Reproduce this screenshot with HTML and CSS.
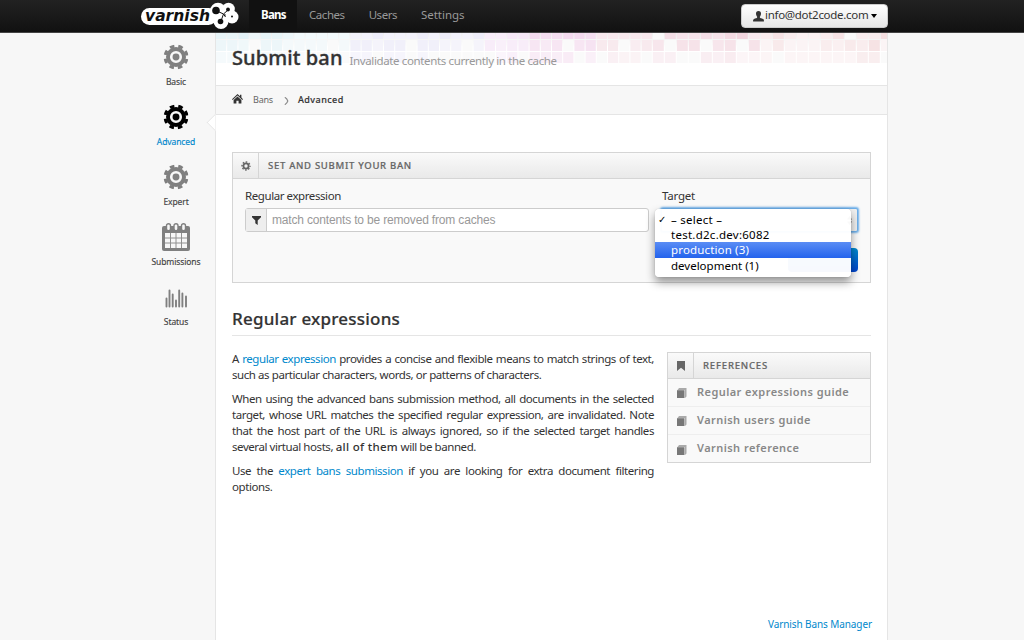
FILE: index.html
```html
<!DOCTYPE html>
<html lang="en">
<head>
<meta charset="utf-8">
<title>Submit ban - Varnish Bans Manager</title>
<link rel="stylesheet" href="styles.css">
</head>
<body>
<svg class="defs" width="0" height="0">
  <symbol id="gear" viewBox="0 0 24 24">
    <g fill="none" stroke="currentColor"><circle cx="12" cy="12" r="7.700" stroke-width="3.800"/><circle cx="12" cy="12" r="10.500" stroke-width="2.900" stroke-dasharray="4.400 3.847" stroke-dashoffset="-1.923"/></g>
    <circle cx="12" cy="12" r="3.300" fill="currentColor"/>
  </symbol>
  <symbol id="book" viewBox="0 0 12 12">
    <path d="M3 1h7.500v8.500L9 11V3H1.500z" fill="#aaa"/><path d="M1 3.200h7.500V11H1z" fill="#777"/>
  </symbol>
</svg>
<header class="topbar">
  <div class="topbar-inner">
    <svg class="logo" width="102" height="32" viewBox="0 0 102 32">
      <g fill="#fff"><rect x="2" y="8" width="76" height="17" rx="8.500"/><circle cx="79" cy="10.500" r="7.800"/><circle cx="89.500" cy="9" r="6.300"/><circle cx="93" cy="17" r="6.500"/><circle cx="82" cy="21.500" r="7.500"/></g>
      <g fill="#111"><circle cx="77" cy="10.500" r="3.800"/><circle cx="89" cy="9.500" r="1.900"/><circle cx="93" cy="16.500" r="1"/><circle cx="81.500" cy="21.500" r="2.800"/></g>
      <path d="M78 11l6.500 3 4.500-4M84.500 14l-2.500 7M84.500 14l2 3" fill="none" stroke="#111" stroke-width="1"/>
      <text class="logo-text" x="6" y="20.500" textLength="65" lengthAdjust="spacingAndGlyphs">varnish</text>
    </svg>
    <nav class="nav">
      <a class="nav-item nav-active">Bans</a>
      <a class="nav-item">Caches</a>
      <a class="nav-item">Users</a>
      <a class="nav-item n-set">Settings</a>
    </nav>
    <button class="account">
      <svg width="11" height="11" viewBox="0 0 11 11"><path d="M5.500 0c1.800 0 2.600 1.200 2.500 2.700C7.900 4.200 7.300 5 6.900 5.600v1.200c.8.700 3.700.8 4 2.300V10.500H.1V9.100c.3-1.500 3.200-1.600 4-2.300V5.600C3.700 5 3.100 4.200 3 2.700 2.900 1.200 3.700 0 5.500 0z" fill="#333"/></svg>
      <span class="mail">info@dot2code.com</span><i class="caret"></i>
    </button>
  </div>
</header>
<div class="layout">
  <aside class="side">
    <a class="side-item"><svg class="side-icon" width="26" height="30"><use href="#gear" x="0.500" y="2.500" width="25" height="25"/></svg><span>Basic</span></a>
    <a class="side-item side-active"><svg class="side-icon" width="26" height="30"><use href="#gear" x="0.500" y="2.500" width="25" height="25"/></svg><span>Advanced</span></a>
    <a class="side-item"><svg class="side-icon" width="26" height="30"><use href="#gear" x="0.500" y="2.500" width="25" height="25"/></svg><span>Expert</span></a>
    <a class="side-item"><svg class="side-icon" width="28" height="30" viewBox="0 0 28 30">
      <path d="M2 4h24q2 0 2 2v21q0 2-2 2H2q-2 0-2-2V6q0-2 2-2z" fill="#808080"/>
      <path d="M3 11h22v15H3z" fill="#f7f7f7"/>
      <path d="M8.500 11v15M14 11v15M19.500 11v15M3 16h22M3 21h22" stroke="#909090" fill="none"/>
      <g fill="#f7f7f7" stroke="#808080" stroke-width="1.400"><rect x="4.500" y="1.700" width="4" height="7" rx="2"/><rect x="12" y="1.700" width="4" height="7" rx="2"/><rect x="19.500" y="1.700" width="4" height="7" rx="2"/></g>
    </svg><span>Submissions</span></a>
    <a class="side-item"><svg class="side-icon" width="24" height="30" viewBox="0 0 24 30"><path d="M2.500 24.500V16.500M5.500 24.500V8.500M8.700 24.500V12.500M12 24.500V18.500M15.200 24.500V8.500M18.400 24.500V11.500M22 24.500V14.500" stroke="#808080" stroke-width="1.900" stroke-linecap="round"/></svg><span>Status</span></a>
  </aside>
  <main class="page">
    <div class="heading">
      <svg class="mosaic" id="mosaic" width="671" height="30"></svg>
      <h1 class="title">Submit ban</h1><span class="subtitle">Invalidate contents currently in the cache</span>
    </div>
    <div class="crumbs">
      <svg class="home" width="11" height="10" viewBox="0 0 11 10"><path d="M5.500 0L8 2.200V.8h1.400v2.700L11 5.200l-.7.700L5.500 1.600.7 5.900 0 5.200zM5.500 2.600L9.400 6v3.600H6.600V6.700H4.400v2.900H1.600V6z" fill="#333"/></svg>
      <a class="crumb">Bans</a>
      <svg class="chev" width="5" height="8" viewBox="0 0 5 8"><path d="M.8.3Q3 1.500 3.800 4 3 6.500.8 7.700" fill="none" stroke="#888" stroke-width="1.100"/></svg>
      <b class="crumb-now">Advanced</b>
    </div>
    <i class="pointer"></i>
    <div class="content">
      <section class="box form-box">
        <div class="box-head"><span class="box-icon"><svg class="small-gear" width="10" height="10" viewBox="0 0 10 10"><circle cx="5" cy="5" r="2.600" stroke-width="1.800"/><circle cx="5" cy="5" r="4" stroke-width="1.400" stroke-dasharray="1.600 1.542" stroke-dashoffset=".8"/></svg></span><span class="box-title t-ban">SET AND SUBMIT YOUR BAN</span></div>
        <div class="form-row">
          <div class="field-re">
            <label class="label">Regular expression</label>
            <div class="input"><span class="addon"><svg width="9" height="9" viewBox="0 0 9 9"><path d="M0 0h9v1.200L5.700 4.600V9L3.300 7.300V4.600L0 1.200z" fill="#333"/></svg></span><span class="placeholder">match contents to be removed from caches</span></div>
          </div>
          <div class="field-target">
            <label class="label l-target">Target</label>
            <div class="select"><svg width="5" height="9" viewBox="0 0 5 9"><path d="M0 3.500L2.500 0 5 3.500zM0 5.500L2.500 9 5 5.500z" fill="#555"/></svg></div>
            <button class="submit"></button>
            <div class="menu">
              <div class="option"><span class="check">✓</span><span class="o1">– select –</span></div>
              <div class="option"><span class="check"></span><span class="o1">test.d2c.dev:6082</span></div>
              <div class="option option-on"><span class="check"></span><span class="o3">production (3)</span></div>
              <div class="option"><span class="check"></span><span>development (1)</span></div>
            </div>
          </div>
        </div>
      </section>
      <h2 class="section-title">Regular expressions</h2>
      <div class="columns">
        <article class="text">
          <p><span class="line">A <a>regular expression</a> provides a concise and flexible means to match strings of text,</span>
          <span class="last">such as particular characters, words, or patterns of characters.</span></p>
          <p><span class="line">When using the advanced bans submission method, all documents in the selected</span>
          <span class="line">target, whose URL matches the specified regular expression, are invalidated. Note</span>
          <span class="line">that the host part of the URL is always ignored, so if the selected target handles</span>
          <span class="last">several virtual hosts, <b>all of them</b> will be banned.</span></p>
          <p><span class="line">Use the <a>expert bans submission</a> if you are looking for extra document filtering</span>
          <span class="last">options.</span></p>
        </article>
        <section class="box refs">
          <div class="box-head"><span class="box-icon"><svg width="8" height="10" viewBox="0 0 8 10"><path d="M0 0h8v10L4 6.800 0 10z" fill="#666"/></svg></span><span class="box-title">REFERENCES</span></div>
          <a class="ref"><svg width="12" height="12"><use href="#book"/></svg><span>Regular expressions guide</span></a>
          <a class="ref"><svg width="12" height="12"><use href="#book"/></svg><span>Varnish users guide</span></a>
          <a class="ref"><svg width="12" height="12"><use href="#book"/></svg><span>Varnish reference</span></a>
        </section>
      </div>
      <footer class="footer"><a>Varnish Bans Manager</a></footer>
    </div>
  </main>
</div>
<script src="mosaic.js"></script>
</body>
</html>
```
FILE: mosaic.js
```js
// Tint strength of each tile, one string per row.
const rows = [
  "33423321111111211121211222336556653333305445467324211240225",
  "33203311110122122022110132335450564403450660560614111324361",
  "11001100000011011010000001305445030322033004351110111111440"
];
const svg = document.getElementById("mosaic");
const tops = [0, 7, 19];
const heights = [6, 11, 11];
rows.forEach((row, r) => {
  [...row].forEach((level, c) => {
    const x = c < 39 ? c * 11.2 : 436.8 + (c - 39) * 12;
    const hue = c < 12 ? 195 : c < 24 ? 245 : c < 28 ? 295 : c < 34 ? 312 : c < 48 ? 340 : 355;
    const rect = document.createElementNS("http://www.w3.org/2000/svg", "rect");
    rect.setAttribute("x", x);
    rect.setAttribute("y", tops[r]);
    rect.setAttribute("width", c < 39 ? 10.2 : 11);
    rect.setAttribute("height", heights[r]);
    const l = 98 - Number(level) * (r === 0 ? 1.3 : r === 1 ? 0.9 : 0.6);
    rect.setAttribute("fill", `hsl(${hue} ${level > 0 ? 50 : 0}% ${l}%)`);
    svg.appendChild(rect);
  });
});
```
FILE: styles.css
```css
* { box-sizing: border-box; }
body { margin: 0; height: 640px; overflow: hidden; background: #f7f7f7; color: #333; font: 12px/16px "Noto Sans", sans-serif; }
a { color: #08c; text-decoration: none; }
.defs { position: absolute; }
.topbar { height: 33px; background: linear-gradient(#222, #111); border-bottom: 1px solid #444; }
.topbar-inner { display: flex; width: 748px; height: 32px; margin-left: 140px; }
.logo { margin-left: -1px; flex: none; }
.logo-text { font: italic bold 15.500px "DejaVu Sans", sans-serif; fill: #111; }
.nav { display: flex; margin-left: 8px; }
.nav-item { padding: 0 12px; color: #999; font-size: 11.500px; line-height: 30px; letter-spacing: -.45px; }
.n-set { letter-spacing: -.05px; }
.nav-active { width: 48px; background: #111; color: #fff; font-weight: bold; letter-spacing: -.75px; }
.account { display: flex; align-items: center; width: 147px; height: 24px; margin: 4px 0 0 auto; padding: 0 0 0 11px; border: 1px solid #ccc; border-radius: 4px; background: linear-gradient(#fff, #e6e6e6); color: #333; font: 11.500px/20px "Noto Sans", sans-serif; }
.mail { margin: -2px 0 0 1px; letter-spacing: -.3px; white-space: nowrap; }
.caret { margin-left: 3px; border: 3.500px solid transparent; border-top: 4px solid #000; border-bottom: 0; }
.layout { display: flex; height: 607px; }
.side { width: 76px; margin-left: 139px; padding-top: 9px; flex: none; }
.side-item { display: flex; flex-direction: column; align-items: center; width: 74px; height: 60px; color: #444; font-size: 8.500px; line-height: 12px; letter-spacing: -.1px; }
.side-item span { margin-top: 4px; white-space: nowrap; -webkit-text-stroke: .15px; }
.side-icon { color: #808080; }
.side-active { color: #08c; }
.side-active .side-icon { color: #000; }
.page { position: relative; display: flex; flex-direction: column; width: 673px; border: solid #e5e5e5; border-width: 0 1px; background: #fff; }
.heading { position: relative; display: flex; align-items: baseline; height: 53px; flex: none; padding: 11px 0 0 16px; border-bottom: 1px solid #e5e5e5; background: linear-gradient(#eee, #fff 14px); }
.mosaic { position: absolute; left: 0; top: 0; }
.title { position: relative; margin: 0; font-size: 20px; line-height: 28px; font-weight: 500; letter-spacing: .1px; -webkit-text-stroke: .35px #333; }
.subtitle { position: relative; margin-left: 7px; color: #999; font-size: 11.500px; letter-spacing: -.37px; }
.crumbs { display: flex; align-items: center; height: 29px; flex: none; padding: 0 0 1px 16px; border-bottom: 1px solid #e5e5e5; background: #f7f7f7; font-size: 9px; }
.home { margin-top: -2px; }
.crumb { margin-left: 10px; color: #666; letter-spacing: -.2px; }
.chev { margin-left: 11px; margin-top: 2px; }
.crumb-now { margin-left: 9px; font-weight: 500; letter-spacing: .45px; -webkit-text-stroke: .15px; }
.pointer { position: absolute; left: -7px; top: 83px; width: 13px; height: 13px; border: solid #e5e5e5; border-width: 0 0 1px 1px; background: #fff; transform: rotate(45deg); clip-path: polygon(0 0, 50% 50%, 100% 100%, 0 100%); }
.content { display: flex; flex: 1; flex-direction: column; min-height: 0; padding: 37px 16px 0; }
.box { border: 1px solid #d5d5d5; background: #f9f9f9; }
.box-head { display: flex; height: 26px; border-bottom: 1px solid #d5d5d5; background: linear-gradient(#fafafa, #e9e9e9); }
.box-icon { display: flex; align-items: center; justify-content: center; width: 26px; border-right: 1px solid #d5d5d5; }
.small-gear { fill: none; stroke: #666; }
.box-title { padding-left: 9px; color: #666; font-size: 9.500px; line-height: 26px; font-weight: 500; letter-spacing: .82px; -webkit-text-stroke: .2px; }
.t-ban { letter-spacing: .7px; }
.form-box { width: 639px; height: 131px; flex: none; }
.form-row { display: flex; padding: 9px 12px; }
.field-re { width: 405px; }
.label { display: block; height: 20px; font-size: 11.500px; letter-spacing: -.42px; line-height: 15px; }
.l-target { padding-left: 1px; letter-spacing: -.2px; }
.field-target { position: relative; flex: none; width: 197px; margin-left: 12px; }
.input { display: flex; height: 24px; border: 1px solid #ccc; border-radius: 3px; background: #fff; }
.addon { display: flex; align-items: center; justify-content: center; width: 21px; border-right: 1px solid #ccc; background: #eee; }
.placeholder { padding-left: 5px; color: #999; font: 12px/22px "Liberation Sans", Arial, sans-serif; letter-spacing: -.17px; white-space: nowrap; }
.select { display: flex; align-items: center; justify-content: flex-end; height: 24px; padding-right: 5px; border: 1px solid #6eb0ea; border-radius: 2px; background: #f0f0f0; box-shadow: 0 0 2px 1px #6eb0ea; }
.submit { display: block; width: 70px; height: 24px; margin: 16px 0 0 auto; padding: 0; border: 0; border-radius: 4px; background: linear-gradient(#08c, #04c); }
.menu { position: absolute; left: -6px; top: 21px; width: 196px; height: 68px; padding-top: 3px; border-radius: 4px; background: rgba(255,255,255,.97); box-shadow: 0 5px 10px rgba(0,0,0,.42), 0 0 1px rgba(0,0,0,.3); color: #000; }
.option { display: flex; height: 15.200px; line-height: 15px; font-size: 11.500px; white-space: nowrap; }
.option-on { background: linear-gradient(#5a8df5, #2463ed); color: #fff; }
.check { width: 16px; padding-left: 3px; font: bold 10px/15px "DejaVu Sans", sans-serif; }
.o1 { letter-spacing: .26px; }
.o3 { letter-spacing: .15px; }
.section-title { height: 30px; flex: none; margin: 23px 0 16px; border-bottom: 1px solid #e5e5e5; font-size: 17px; line-height: 26px; font-weight: 500; letter-spacing: .22px; -webkit-text-stroke: .2px; }
.columns { display: flex; justify-content: space-between; }
.text { width: 422px; margin-top: -1px; font-size: 11.500px; letter-spacing: -.43px; }
.text p { margin: 0 0 8px; }
.text b { font-weight: 500; letter-spacing: .3px; }
.line, .last { display: block; white-space: nowrap; }
.line { text-align: justify; text-align-last: justify; white-space: normal; }
.refs { width: 204px; height: 111px; }
.ref { display: flex; align-items: center; height: 28px; padding: 0 0 2px 8px; border-bottom: 1px solid #eee; color: #888; font-size: 11px; font-weight: 600; letter-spacing: .44px; white-space: nowrap; }
.ref:last-child { border: 0; }
.ref svg { margin-top: 3px; }
.ref span { margin-left: 9px; }
.footer { margin: auto -1px 8px 0; text-align: right; font-size: 10px; letter-spacing: -.1px; }
```
